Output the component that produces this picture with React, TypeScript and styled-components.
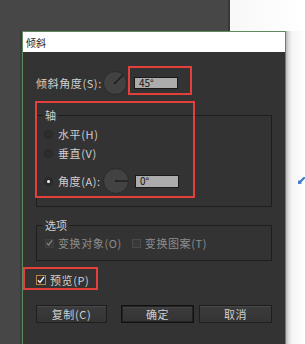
import React from "react";
import styled, { createGlobalStyle } from "styled-components";

const GlobalStyle = createGlobalStyle`
  html, body { margin: 0; padding: 0; background: #fff; }
  body { font-family: "Noto Sans CJK SC", "Noto Sans", sans-serif; }
  * { box-sizing: border-box; }
`;

const Page = styled.div`
  width: 305px;
  height: 344px;
  display: grid;
  grid-template-columns: 22px 264px 19px;
  grid-template-rows: 31px 313px;
  overflow: hidden;
`;

const TopStrip = styled.div`
  grid-column: 1 / -1;
  grid-row: 1;
  background: linear-gradient(
    to right,
    #474747 0,
    #474747 228px,
    #383838 228px,
    #383838 230px,
    #f8f8f8 230px,
    #ffffff 100%
  );
`;

const LeftStrip = styled.div`
  grid-column: 1;
  grid-row: 2;
  background: #474747;
  box-shadow: inset -2px 0 0 #3d3d3d;
`;

const RightStrip = styled.div`
  grid-column: 3;
  grid-row: 2;
  padding: 134px 0 0 12px;
  background: linear-gradient(to right, #b9b9b9 0, #e2e2e2 3px, #f5f5f5 6px, #ffffff 100%);
`;

const Dialog = styled.div`
  grid-column: 2;
  grid-row: 2;
  display: flex;
  flex-direction: column;
  border: 1px solid #5f8a60;
  border-bottom: none;
  background: #333333;
`;

const TitleBar = styled.div`
  height: 20px;
  display: flex;
  align-items: center;
  padding-left: 3px;
  background: #ffffff;
  color: #1e1e1e;
  font-size: 10px;
`;

const Body = styled.div`
  position: relative;
  flex: 1;
  display: flex;
  flex-direction: column;
  padding: 19px 13px 0 13px;
`;

const Row = styled.div<{ $h: number; $mt?: number }>`
  display: flex;
  align-items: center;
  height: ${(p) => p.$h}px;
  margin-top: ${(p) => p.$mt ?? 0}px;
`;

const Label = styled.span<{ $w?: number; $dim?: boolean }>`
  ${(p) => (p.$w ? `width: ${p.$w}px;` : "")}
  flex-shrink: 0;
  font-size: 11px;
  letter-spacing: 0.6px;
  white-space: nowrap;
  color: ${(p) => (p.$dim ? "#8c8c8c" : "#cfcfcf")};
`;

const ValueBox = styled.div<{ $ml: number; $h: number }>`
  width: 44px;
  height: ${(p) => p.$h}px;
  margin-left: ${(p) => p.$ml}px;
  display: flex;
  align-items: center;
  padding-left: 4px;
  background: #acacac;
  border: 1px solid #1a1a1a;
  color: #111;
  font-size: 10px;
  line-height: 1;
`;

const Group = styled.div<{ $mt: number; $h: number }>`
  position: relative;
  margin-top: ${(p) => p.$mt}px;
  height: ${(p) => p.$h}px;
  border: 1px solid #1e1e1e;
  display: flex;
  flex-direction: column;
`;

const Legend = styled.span`
  position: absolute;
  top: -9px;
  left: 6px;
  padding: 0 2px;
  background: #333333;
  color: #cfcfcf;
  font-size: 11px;
  line-height: 16px;
`;

const AxisContent = styled.div`
  display: flex;
  flex-direction: column;
  padding: 11px 0 0 7px;
`;

const OptionContent = styled.div`
  flex: 1;
  display: flex;
  align-items: center;
  padding-left: 8px;
`;

const Radio = styled.span<{ $on?: boolean }>`
  width: 9px;
  height: 9px;
  flex-shrink: 0;
  margin-right: 5px;
  border-radius: 50%;
  background: #2d2d2d;
  border: 1px solid #272727;
  display: flex;
  align-items: center;
  justify-content: center;
  &::after {
    content: "";
    display: ${(p) => (p.$on ? "block" : "none")};
    width: 3px;
    height: 3px;
    border-radius: 50%;
    background: #f2f2f2;
  }
`;

const Box = styled.span<{ $size: number; $tone: "dim" | "empty" | "active"; $ml?: number }>`
  width: ${(p) => p.$size}px;
  height: ${(p) => p.$size}px;
  flex-shrink: 0;
  margin-left: ${(p) => p.$ml ?? 0}px;
  margin-right: 4px;
  display: flex;
  align-items: center;
  justify-content: center;
  background: ${(p) => (p.$tone === "active" ? "#2f2f2f" : "#3a3a3a")};
  border: 1px solid
    ${(p) => (p.$tone === "active" ? "#b9844c" : p.$tone === "dim" ? "#3f3f3f" : "#4a4a4a")};
`;

const ButtonRow = styled.div`
  display: flex;
  margin-top: 19px;
`;

const Button = styled.div<{ $w: number; $mr?: number; $primary?: boolean }>`
  width: ${(p) => p.$w}px;
  height: 18px;
  margin-right: ${(p) => p.$mr ?? 0}px;
  display: flex;
  align-items: center;
  justify-content: center;
  background: linear-gradient(#3c3c3c, #343434);
  border: 1px solid ${(p) => (p.$primary ? "#121212" : "#1e1e1e")};
  box-shadow: ${(p) =>
    p.$primary ? "inset 0 0 0 1px #222, inset 0 2px 0 #444" : "inset 0 1px 0 #474747"};
  color: #cfcfcf;
  font-size: 11px;
  letter-spacing: 0.6px;
`;

const Highlight = styled.div<{ $l: number; $t: number; $w: number; $h: number }>`
  position: absolute;
  left: ${(p) => p.$l}px;
  top: ${(p) => p.$t}px;
  width: ${(p) => p.$w}px;
  height: ${(p) => p.$h}px;
  border: 2px solid #e3403c;
  pointer-events: none;
`;

const Dial = ({ size, angle }: { size: number; angle: number }) => {
  const r = size / 2;
  const rad = (angle * Math.PI) / 180;
  const x2 = r + (r - 1) * Math.cos(rad);
  const y2 = r - (r - 1) * Math.sin(rad);
  return (
    <svg width={size} height={size} viewBox={`0 0 ${size} ${size}`} style={{ flexShrink: 0 }}>
      <circle cx={r} cy={r} r={r - 0.5} fill="#424242" stroke="#2b2b2b" strokeWidth="1" />
      <line x1={r} y1={r} x2={x2} y2={y2} stroke="#1a1a1a" strokeWidth="1.2" />
      <circle cx={r} cy={r} r="1" fill="#1a1a1a" />
    </svg>
  );
};

const Check = ({ color }: { color: string }) => (
  <svg width="8" height="8" viewBox="0 0 8 8">
    <path d="M1 4.2 L3 6.4 L7 1" fill="none" stroke={color} strokeWidth="1.4" />
  </svg>
);

export default function App() {
  return (
    <>
      <GlobalStyle />
      <Page>
        <TopStrip />
        <LeftStrip />
        <Dialog>
          <TitleBar>倾斜</TitleBar>
          <Body>
            <Row $h={24}>
              <Label $w={67}>倾斜角度(S):</Label>
              <Dial size={24} angle={45} />
              <ValueBox $ml={7} $h={12}>45°</ValueBox>
            </Row>

            <Group $mt={20} $h={92}>
              <Legend>轴</Legend>
              <AxisContent>
                <Row $h={14}>
                  <Radio />
                  <Label>水平(H)</Label>
                </Row>
                <Row $h={14} $mt={5}>
                  <Radio />
                  <Label>垂直(V)</Label>
                </Row>
                <Row $h={26} $mt={8}>
                  <Radio $on />
                  <Label $w={45}>角度(A):</Label>
                  <Dial size={26} angle={0} />
                  <ValueBox $ml={6} $h={13}>0°</ValueBox>
                </Row>
              </AxisContent>
            </Group>

            <Group $mt={18} $h={36}>
              <Legend>选项</Legend>
              <OptionContent>
                <Box $size={9} $tone="dim">
                  <Check color="#8a8a8a" />
                </Box>
                <Label $dim>变换对象(O)</Label>
                <Box $size={9} $tone="empty" $ml={10} />
                <Label $dim>变换图案(T)</Label>
              </OptionContent>
            </Group>

            <Row $h={12} $mt={13}>
              <Box $size={10} $tone="active">
                <Check color="#f0f0f0" />
              </Box>
              <Label>预览(P)</Label>
            </Row>

            <ButtonRow>
              <Button $w={71} $mr={14}>复制(C)</Button>
              <Button $w={73} $mr={5} $primary>确定</Button>
              <Button $w={73}>取消</Button>
            </ButtonRow>

            <Highlight $l={105} $t={14} $w={64} $h={29} />
            <Highlight $l={12} $t={49} $w={160} $h={97} />
            <Highlight $l={0} $t={215} $w={75} $h={23} />
          </Body>
        </Dialog>
        <RightStrip>
          <svg width="7" height="7" viewBox="0 0 7 7">
            <path d="M1 6 L6 1" stroke="#3a78d0" strokeWidth="2.2" strokeLinecap="round" />
            <path d="M1 6 L1 3.5 M1 6 L3.5 6" stroke="#3a78d0" strokeWidth="1.6" />
          </svg>
        </RightStrip>
      </Page>
    </>
  );
}
